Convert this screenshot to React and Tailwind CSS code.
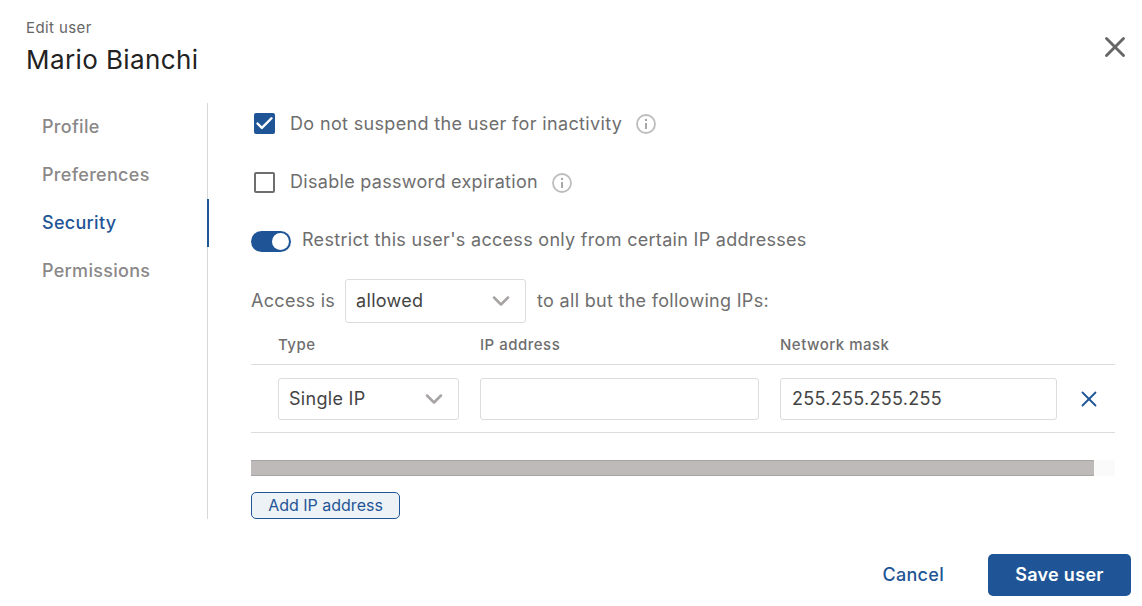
import React from "react";
import { X, Check, ChevronDown } from "lucide-react";

const tabs = ["Profile", "Preferences", "Security", "Permissions"];

const InfoIcon = () => (
  <svg width="20" height="20" viewBox="0 0 20 20" fill="none" className="shrink-0">
    <circle cx="10" cy="10" r="9" stroke="#bdbdbd" strokeWidth="1.8" />
    <circle cx="10" cy="6" r="1.2" fill="#a8a8a8" />
    <path d="M10 9v6" stroke="#a8a8a8" strokeWidth="2" />
  </svg>
);

const Select = ({ value, className }) => (
  <div className={`flex items-center justify-between bg-white border border-[#dcdcdc] rounded-[3px] text-[#444] text-[18px] tracking-[0.3px] ${className}`}>
    <span className="pb-[1px]">{value}</span>
    <ChevronDown size={28} strokeWidth={2.2} className="text-[#a8a4a4]" />
  </div>
);

const App = () => {
  return (
    <div className="w-[1142px] h-[606px] bg-white overflow-hidden font-['Inter',sans-serif] text-[#6e6e6e]">
      {/* Cabecera */}
      <div className="flex justify-between pl-[26px] pr-[10px] h-[103px]">
        <div className="pt-[18px]">
          <div className="text-[15px] leading-[20px] tracking-[0.4px] text-[#666]">Edit user</div>
          <div className="text-[26px] leading-[32px] mt-[6px] tracking-[0.4px] text-[#222]">Mario Bianchi</div>
        </div>
        <X size={34} strokeWidth={2} className="text-[#666] mt-[30px]" />
      </div>

      <div className="flex h-[416px]">
        {/* Tabs */}
        <div className="w-[208px] border-r border-[#d8d8d8] shrink-0">
          {tabs.map((tab) => (
            <div
              key={tab}
              className={`relative h-[48px] pl-[42px] pb-[2px] flex items-center text-[18px] tracking-[0.3px] font-medium ${
                tab === "Security" ? "text-[#1f5596]" : "text-[#8a8888]"
              }`}
            >
              {tab}
              {tab === "Security" && (
                <span className="absolute right-[-2px] top-0 w-[2px] h-[48px] bg-[#1f5596]" />
              )}
            </div>
          ))}
        </div>

        {/* Contenido */}
        <div className="flex-1 pl-[43px] pr-[27px] text-[18px] tracking-[0.3px]">
          <div className="flex items-center h-[21px] mt-[10px] pl-[3px]">
            <span className="w-[21px] h-[21px] bg-[#1f5596] rounded-[2px] flex items-center justify-center shrink-0">
              <Check size={21} strokeWidth={2.8} className="text-white" />
            </span>
            <span className="ml-[15px] pb-[1px] tracking-[0.35px]">Do not suspend the user for inactivity</span>
            <span className="ml-[14px]"><InfoIcon /></span>
          </div>

          <div className="flex items-center h-[21px] mt-[38px] pl-[3px]">
            <span className="w-[21px] h-[21px] border-2 border-[#6e6e6e] rounded-[2px] shrink-0" />
            <span className="ml-[15px] pb-[3px]">Disable password expiration</span>
            <span className="ml-[14px]"><InfoIcon /></span>
          </div>

          <div className="flex items-center h-[22px] mt-[35px]">
            <span className="w-[40px] h-[21px] mt-[5px] rounded-full bg-[#1f5596] flex items-center justify-end pr-[2px] shrink-0">
              <span className="w-[17px] h-[17px] rounded-full bg-white" />
            </span>
            <span className="ml-[11px]">Restrict this user's access only from certain IP addresses</span>
          </div>

          <div className="flex items-center mt-[29px] h-[44px]">
            <span className="pb-[2px]">Access is</span>
            <Select value="allowed" className="w-[181px] h-[44px] ml-[10px] pl-[10px] pr-[10px]" />
            <span className="ml-[11px] pb-[2px]">to all but the following IPs:</span>
          </div>

          {/* Tabla de IPs */}
          <div className="flex items-center h-[42px] pl-[27px] pt-[4px] text-[15px] tracking-[0.5px] font-medium text-[#6e6e6e] border-b border-[#dcdcdc]">
            <span className="w-[202px]">Type</span>
            <span className="w-[300px]">IP address</span>
            <span>Network mask</span>
          </div>
          <div className="flex items-center h-[68px] pl-[27px] border-b border-[#dcdcdc]">
            <Select value="Single IP" className="w-[181px] h-[42px] pl-[10px] pr-[10px]" />
            <div className="w-[279px] h-[42px] ml-[21px] bg-white border border-[#dcdcdc] rounded-[3px]" />
            <div className="w-[277px] h-[42px] ml-[21px] pl-[11px] flex items-center bg-white border border-[#dcdcdc] rounded-[3px] text-[#444]">
              255.255.255.255
            </div>
            <X size={26} strokeWidth={1.7} className="text-[#1f5596] ml-[19px]" />
          </div>

          {/* Scrollbar */}
          <div className="h-[16px] mt-[27px] bg-[#fafafa]">
            <div className="w-[843px] h-[16px] bg-[#bfbaba] border-t border-b border-t-[#a8a4a4] border-b-[#a8a4a4]" />
          </div>

          <button className="block w-[149px] h-[27px] mt-[16px] pb-[1px] rounded-[5px] border border-[#1f5596] bg-[#edf2f7] text-[#1f5596] text-[16px] tracking-normal leading-[24px]">
            Add IP address
          </button>
        </div>
      </div>

      {/* Acciones */}
      <div className="flex justify-end items-center pr-[11px] pt-[35px]">
        <button className="text-[#1f5596] text-[18px] tracking-[0.3px] font-medium mr-[44px] pb-[2px]">Cancel</button>
        <button className="w-[143px] h-[42px] pb-[1px] rounded-[5px] bg-[#1f5596] text-white text-[18px] tracking-[0.3px] font-semibold">
          Save user
        </button>
      </div>
    </div>
  );
};

export default App;
